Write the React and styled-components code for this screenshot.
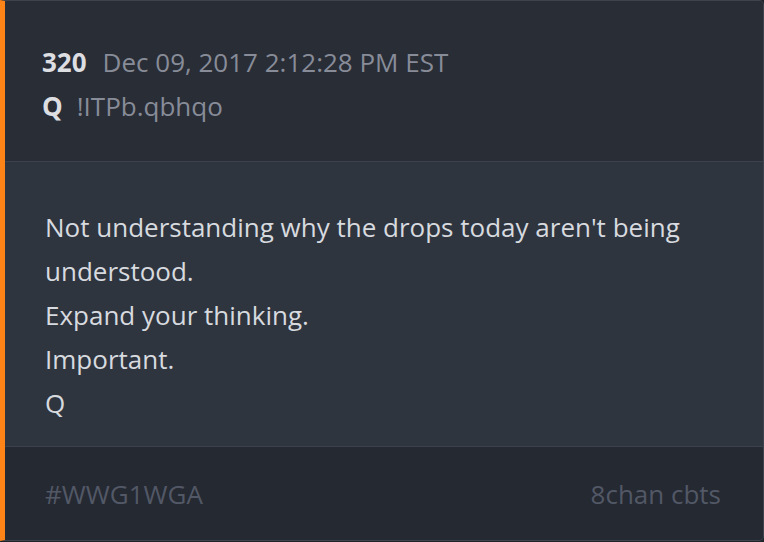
import React from 'react';
import styled, { createGlobalStyle } from 'styled-components';

const GlobalStyle = createGlobalStyle`
  html, body {
    margin: 0;
    padding: 0;
    background: #1f232a;
  }
  body {
    font-family: 'Open Sans', 'Noto Sans', sans-serif;
  }
`;

const Card = styled.div`
  box-sizing: border-box;
  width: 764px;
  height: 541px;
  display: flex;
  flex-direction: column;
  border: 1px solid #3e434d;
  border-left: 5px solid #ff8417;
  border-radius: 0 5px 5px 0;
  overflow: hidden;
  background: #2f353f;
`;

const Header = styled.div`
  height: 161px;
  box-sizing: border-box;
  padding: 39px 37px 0;
  background: #292d36;
  border-bottom: 1px solid #3c414b;
  font-size: 26px;
  line-height: 44px;
`;

const MetaRow = styled.div`
  display: flex;
  align-items: baseline;
  gap: ${(p) => p.$gap}px;
`;

const Strong = styled.span`
  font-weight: 700;
  color: #dcdee2;
`;

const Muted = styled.span`
  color: #878c98;
`;

const Body = styled.div`
  flex: 1;
  box-sizing: border-box;
  padding: 43px 40px 0;
  color: #d7dadf;
  font-size: 26px;
  line-height: 44px;
  border-bottom: 1px solid #3c414b;
`;

const Footer = styled.div`
  height: 93px;
  box-sizing: border-box;
  display: flex;
  align-items: center;
  justify-content: space-between;
  padding: 0 42px 0 40px;
  background: #252932;
  color: #525866;
  font-size: 26px;
`;

const lines = [
  "Not understanding why the drops today aren't being understood.",
  'Expand your thinking.',
  'Important.',
  'Q',
];

export default function App() {
  return (
    <>
      <GlobalStyle />
      <Card>
        <Header>
          <MetaRow $gap={16}>
            <Strong>320</Strong>
            <Muted>Dec 09, 2017 2:12:28 PM EST</Muted>
          </MetaRow>
          <MetaRow $gap={14}>
            <Strong>Q</Strong>
            <Muted>!ITPb.qbhqo</Muted>
          </MetaRow>
        </Header>
        <Body>
          {lines.map((l, i) => (
            <div key={i}>{l}</div>
          ))}
        </Body>
        <Footer>
          <span>#WWG1WGA</span>
          <span>8chan cbts</span>
        </Footer>
      </Card>
    </>
  );
}
